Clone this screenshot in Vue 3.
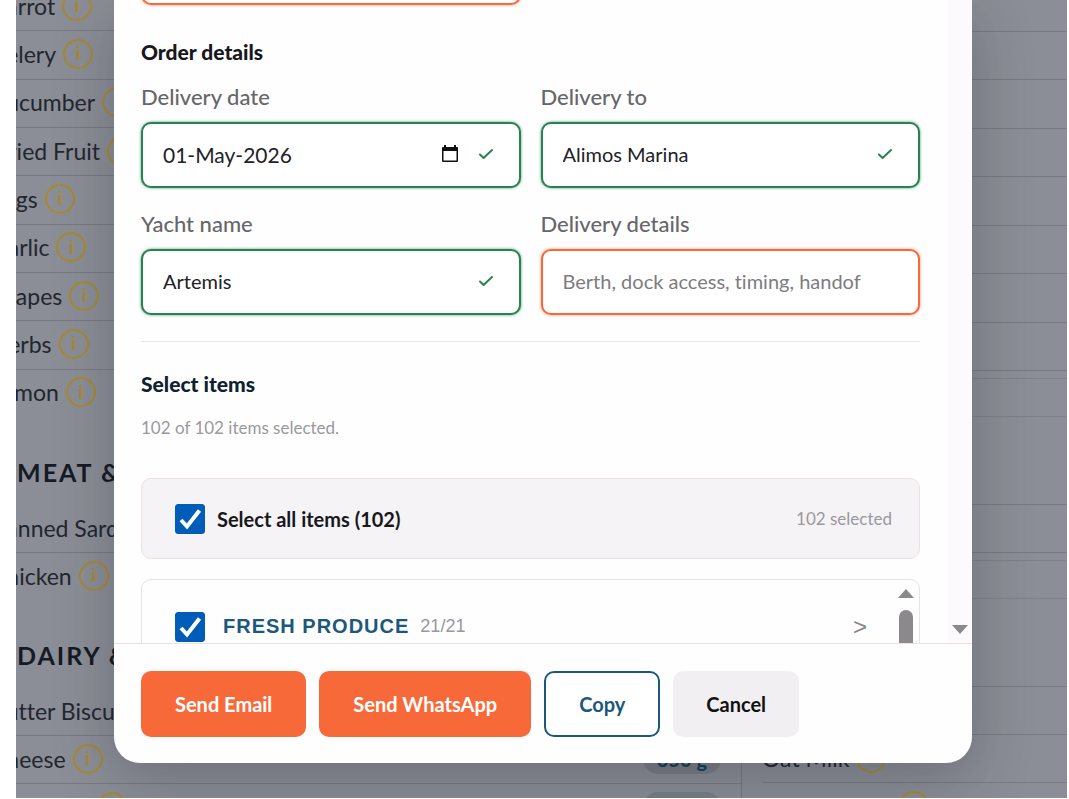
<script setup>
import { ref } from 'vue'

const produce = ['Carrot', 'Celery', 'Cucumber', 'Dried Fruit', 'Eggs', 'Garlic', 'Grapes', 'Herbs', 'Lemon']
const meat = ['Canned Sardines', 'Chicken']
const dairy = [
  { name: 'Butter Biscuits', qty: '' },
  { name: 'Cheese', qty: '350 g' },
  { name: 'Cold Cuts', qty: '500 g' },
]
const drinks = ['', 'Oat Milk', 'Orange Juice']

const deliveryDate = ref('01-May-2026')
const deliveryTo = ref('Alimos Marina')
const yachtName = ref('Artemis')
const deliveryDetails = ref('')
const allSelected = ref(true)
const produceSelected = ref(true)
</script>

<template>
  <div class="stage">
    <div class="list" aria-hidden="true">
      <div class="column left">
        <ul class="rows long">
          <li v-for="name in produce" :key="name"><span>{{ name }}</span><i class="info">i</i></li>
        </ul>
        <h2>MEAT &amp; FISH</h2>
        <ul class="rows">
          <li v-for="name in meat" :key="name"><span>{{ name }}</span><i class="info">i</i></li>
        </ul>
        <h2>DAIRY &amp; DRY</h2>
        <ul class="rows lined">
          <li v-for="item in dairy" :key="item.name">
            <span>{{ item.name }}</span><i class="info">i</i><b v-if="item.qty" class="qty">{{ item.qty }}</b>
          </li>
        </ul>
      </div>
      <div class="column right">
        <ul class="rows top lined"><li v-for="n in 8" :key="n"></li></ul>
        <div class="gap small"></div>
        <div class="gap medium"></div>
        <div class="gap large"></div>
        <ul class="rows lined"><li></li></ul>
        <div class="gap small"></div>
        <div class="gap medium"></div>
        <div class="gap large"></div>
        <ul class="rows lined">
          <li v-for="name in drinks" :key="name"><span>{{ name }}</span><i v-if="name" class="info">i</i></li>
        </ul>
      </div>
    </div>

    <form class="modal" @submit.prevent>
      <div class="body">
        <div class="content">
          <div class="grid previous">
            <input class="box" type="text" aria-label="Contact" />
          </div>

          <h3 class="title">Order details</h3>
          <div class="grid">
            <div class="field">
              <label for="date">Delivery date</label>
              <div class="box ok">
                <input id="date" v-model="deliveryDate" class="date" type="text" />
                <svg class="calendar" viewBox="0 0 18 20" aria-hidden="true">
                  <path d="M3 1h2v2h8V1h2v2h1a1 1 0 0 1 1 1v13a1 1 0 0 1-1 1H2a1 1 0 0 1-1-1V4a1 1 0 0 1 1-1h1zM2.500 7v9.500h13V7z" fill="#111" fill-rule="evenodd" />
                </svg>
                <svg class="tick" viewBox="0 0 16 12" aria-hidden="true"><path d="M2 6.500l3.600 3.500L14 2" /></svg>
              </div>
            </div>
            <div class="field">
              <label for="place">Delivery to</label>
              <div class="box ok">
                <input id="place" v-model="deliveryTo" type="text" />
                <svg class="tick" viewBox="0 0 16 12" aria-hidden="true"><path d="M2 6.500l3.600 3.500L14 2" /></svg>
              </div>
            </div>
            <div class="field">
              <label for="yacht">Yacht name</label>
              <div class="box ok">
                <input id="yacht" v-model="yachtName" type="text" />
                <svg class="tick" viewBox="0 0 16 12" aria-hidden="true"><path d="M2 6.500l3.600 3.500L14 2" /></svg>
              </div>
            </div>
            <div class="field">
              <label for="details">Delivery details</label>
              <div class="box">
                <input id="details" v-model="deliveryDetails" type="text" placeholder="Berth, dock access, timing, handof" />
              </div>
            </div>
          </div>

          <hr />

          <h3 class="title navy">Select items</h3>
          <p class="hint">102 of 102 items selected.</p>

          <div class="all">
            <label class="check">
              <span class="mark">
                <input v-model="allSelected" type="checkbox" />
                <svg viewBox="0 0 30 30" aria-hidden="true"><path d="M6 16l6 6.500L24.500 6.500" /></svg>
              </span>
              Select all items (102)
            </label>
            <span class="count">102 selected</span>
          </div>

          <div class="groups">
            <div class="group">
              <label class="check category">
                <span class="mark">
                  <input v-model="produceSelected" type="checkbox" />
                  <svg viewBox="0 0 30 30" aria-hidden="true"><path d="M6 16l6 6.500L24.500 6.500" /></svg>
                </span>
                FRESH PRODUCE
              </label>
              <span class="ratio">21/21</span>
              <button class="expand" type="button" aria-label="Expand group">&gt;</button>
            </div>
            <div class="inner-bar"><span class="arrow up"></span><span class="thumb"></span></div>
          </div>
        </div>
        <div class="outer-bar"><span class="arrow down"></span></div>
      </div>

      <footer>
        <button class="btn primary" type="submit">Send Email</button>
        <button class="btn primary" type="button">Send WhatsApp</button>
        <button class="btn outline" type="button">Copy</button>
        <button class="btn plain" type="button">Cancel</button>
      </footer>
    </form>
  </div>
</template>

<style>
body { margin: 0; background: #fff; }
</style>

<style scoped>
* { box-sizing: border-box; }

.stage {
  position: relative;
  height: calc(100vh - 1px);
  margin: 0 2px 0 16px;
  overflow: hidden;
  background: #8b8e96;
  font-family: Lato, "Liberation Sans", sans-serif;
  font-variant-ligatures: none;
  color: #18181c;
}

/* Page behind the dialog */
.list {
  display: grid;
  grid-template-columns: 726px 1fr;
  height: 100%;
  overflow: hidden;
  color: #22262f;
}
.column { margin-top: -17px; }
.left { border-right: 1px solid #777a82; }
.left .rows li { padding-right: 20px; }
.left .rows span { margin-left: -25px; }
.right { padding-left: 20px; }
.rows { list-style: none; margin: 0; padding: 0; }
.rows li {
  display: flex;
  align-items: center;
  gap: 7px;
  height: 48px;
  padding-bottom: 2px;
  border-bottom: 1px solid #777a82;
  font-size: 23px;
  white-space: nowrap;
}
.rows li:last-child { border-bottom-color: transparent; }
.rows.lined li:last-child { border-bottom-color: #777a82; }
.rows.long { display: grid; grid-auto-rows: 1fr; height: 435px; }
.rows.top { display: grid; grid-auto-rows: 1fr; height: 388px; }
.rows.long li, .rows.top li { height: auto; }
.info {
  display: grid;
  place-items: center;
  width: 30px;
  height: 30px;
  flex: none;
  border: 2px solid #a68a32;
  border-radius: 50%;
  color: #a68a32;
  font: 700 17px "Open Sans", "Liberation Sans", sans-serif;
}
.qty {
  margin-left: auto;
  width: 78px;
  line-height: 30px;
  border-radius: 15px;
  background: #7a7e86;
  color: #143d59;
  font-size: 20px;
  text-align: center;
}
.left h2 {
  margin: 0;
  height: 87px;
  padding: 24px 0 0 1px;
  line-height: 60px;
  color: #151a24;
  font-size: 25px;
  font-weight: 700;
  letter-spacing: 2px;
  white-space: nowrap;
}
.gap { border-bottom: 1px solid #7f828a; }
.gap.small { height: 8px; }
.gap.medium { height: 38px; }
.gap.large { height: 88px; border-bottom-color: #777a82; }

/* Dialog */
.modal {
  position: absolute;
  top: 0;
  right: 95px;
  bottom: 35px;
  left: 98px;
  display: flex;
  flex-direction: column;
  overflow: hidden;
  border-radius: 0 0 26px 26px;
  background: #fefefe;
  box-shadow: 0 16px 60px rgba(30, 34, 44, 0.28);
}
.body {
  display: flex;
  flex: 1;
  min-height: 0;
  gap: 28px;
  padding-left: 27px;
  overflow: hidden;
}
.content { flex: 1; min-width: 0; }
.grid {
  display: grid;
  grid-template-columns: 1fr 1fr;
  gap: 22px 20px;
}
.previous { margin-top: -61px; }
.title {
  margin: 34px 0 18px;
  line-height: 26px;
  font-size: 21px;
  font-weight: 900;
}
.title.navy { margin: 29px 0 0; color: #0e2230; }
.field label {
  display: block;
  margin-bottom: 10px;
  line-height: 30px;
  color: #67666b;
  font-size: 22px;
  font-weight: 500;
}
.field { margin-top: -1px; }
.box {
  display: flex;
  align-items: center;
  width: 100%;
  height: 66px;
  padding: 0 25px 2px 20px;
  border: 2px solid #f9693a;
  border-radius: 10px;
  background: #fff;
  box-shadow: 0 0 3px rgba(249, 105, 58, 0.7);
}
.box.ok { border-color: #2a8253; box-shadow: 0 0 3px rgba(42, 130, 83, 0.8); }
.box input {
  flex: 1;
  min-width: 0;
  padding: 0;
  border: 0;
  outline: 0;
  background: none;
  color: #222226;
  font: 400 20px Lato, "Liberation Sans", sans-serif;
  font-variant-ligatures: none;
}
.box input.date { font-size: 21px; }
.box input::placeholder { color: #7d7c80; opacity: 1; }
.calendar { width: 18px; height: 20px; margin-right: 19px; }
.tick { width: 16px; height: 12px; fill: none; stroke: #2a8253; stroke-width: 2; stroke-linecap: round; stroke-linejoin: round; }
hr { height: 1px; margin: 26px 0 0; border: 0; background: #e9e5e6; }
.hint { margin: 19px 0 38px; line-height: 24px; color: #9a999d; font-size: 17px; }

.all {
  display: flex;
  align-items: center;
  justify-content: space-between;
  height: 81px;
  padding: 0 27px 0 33px;
  border: 1px solid #eae1e1;
  border-radius: 10px;
  background: #f5f3f6;
}
.check { display: flex; align-items: center; gap: 12px; font-size: 20px; font-weight: 700; white-space: nowrap; }
.mark { display: grid; width: 30px; height: 30px; }
.mark input, .mark svg { grid-area: 1 / 1; width: 30px; height: 30px; margin: 0; }
.mark input { appearance: none; border: 1px solid #767676; border-radius: 3px; background: #fff; }
.mark input:checked { border-color: #005cb9; background: #005cb9; }
.mark svg { pointer-events: none; fill: none; stroke: none; stroke-width: 4; }
.mark input:checked + svg { stroke: #fff; }
.count { color: #9a999d; font-size: 17px; }

.groups {
  display: flex;
  height: 240px;
  margin-top: 20px;
  border: 1px solid #eae1e1;
  border-radius: 10px;
}
.group { display: flex; flex: 1; align-items: center; height: 93px; padding: 0 25px 0 33px; }
.category { gap: 18px; color: #1b587b; font-family: "Liberation Sans", sans-serif; letter-spacing: 1px; }
.ratio { margin-left: 11px; color: #99989c; font: 18px "Liberation Sans", sans-serif; }
.expand { margin-left: auto; padding: 0; border: 0; background: none; color: #858488; font: 24px "Liberation Sans", sans-serif; }
.inner-bar { display: flex; flex-direction: column; align-items: center; gap: 12px; width: 27px; padding-top: 9px; }
.thumb { flex: 1; width: 14px; border-radius: 7px; background: #8b898c; }
.outer-bar { display: flex; align-items: flex-end; justify-content: center; width: 24px; padding-bottom: 9px; background: #fcfafd; }
.arrow { border: 8px solid transparent; }
.arrow.up { border-top: 0; border-bottom: 9px solid #8b898c; }
.arrow.down { border-bottom: 0; border-top: 9px solid #8b898c; }

footer {
  display: flex;
  gap: 13px;
  padding: 27px 27px 26px;
  border-top: 1px solid #eae1e1;
}
.btn {
  height: 66px;
  padding: 0 33px;
  border: 0;
  border-radius: 10px;
  font: 700 20px Lato, "Liberation Sans", sans-serif;
  white-space: nowrap;
}
.primary { padding: 0 34px; background: #f8693a; color: #fff; }
.outline { border: 2px solid #1b587b; background: #fff; color: #1b587b; }
.plain { background: #f1eff2; color: #111; }
</style>
